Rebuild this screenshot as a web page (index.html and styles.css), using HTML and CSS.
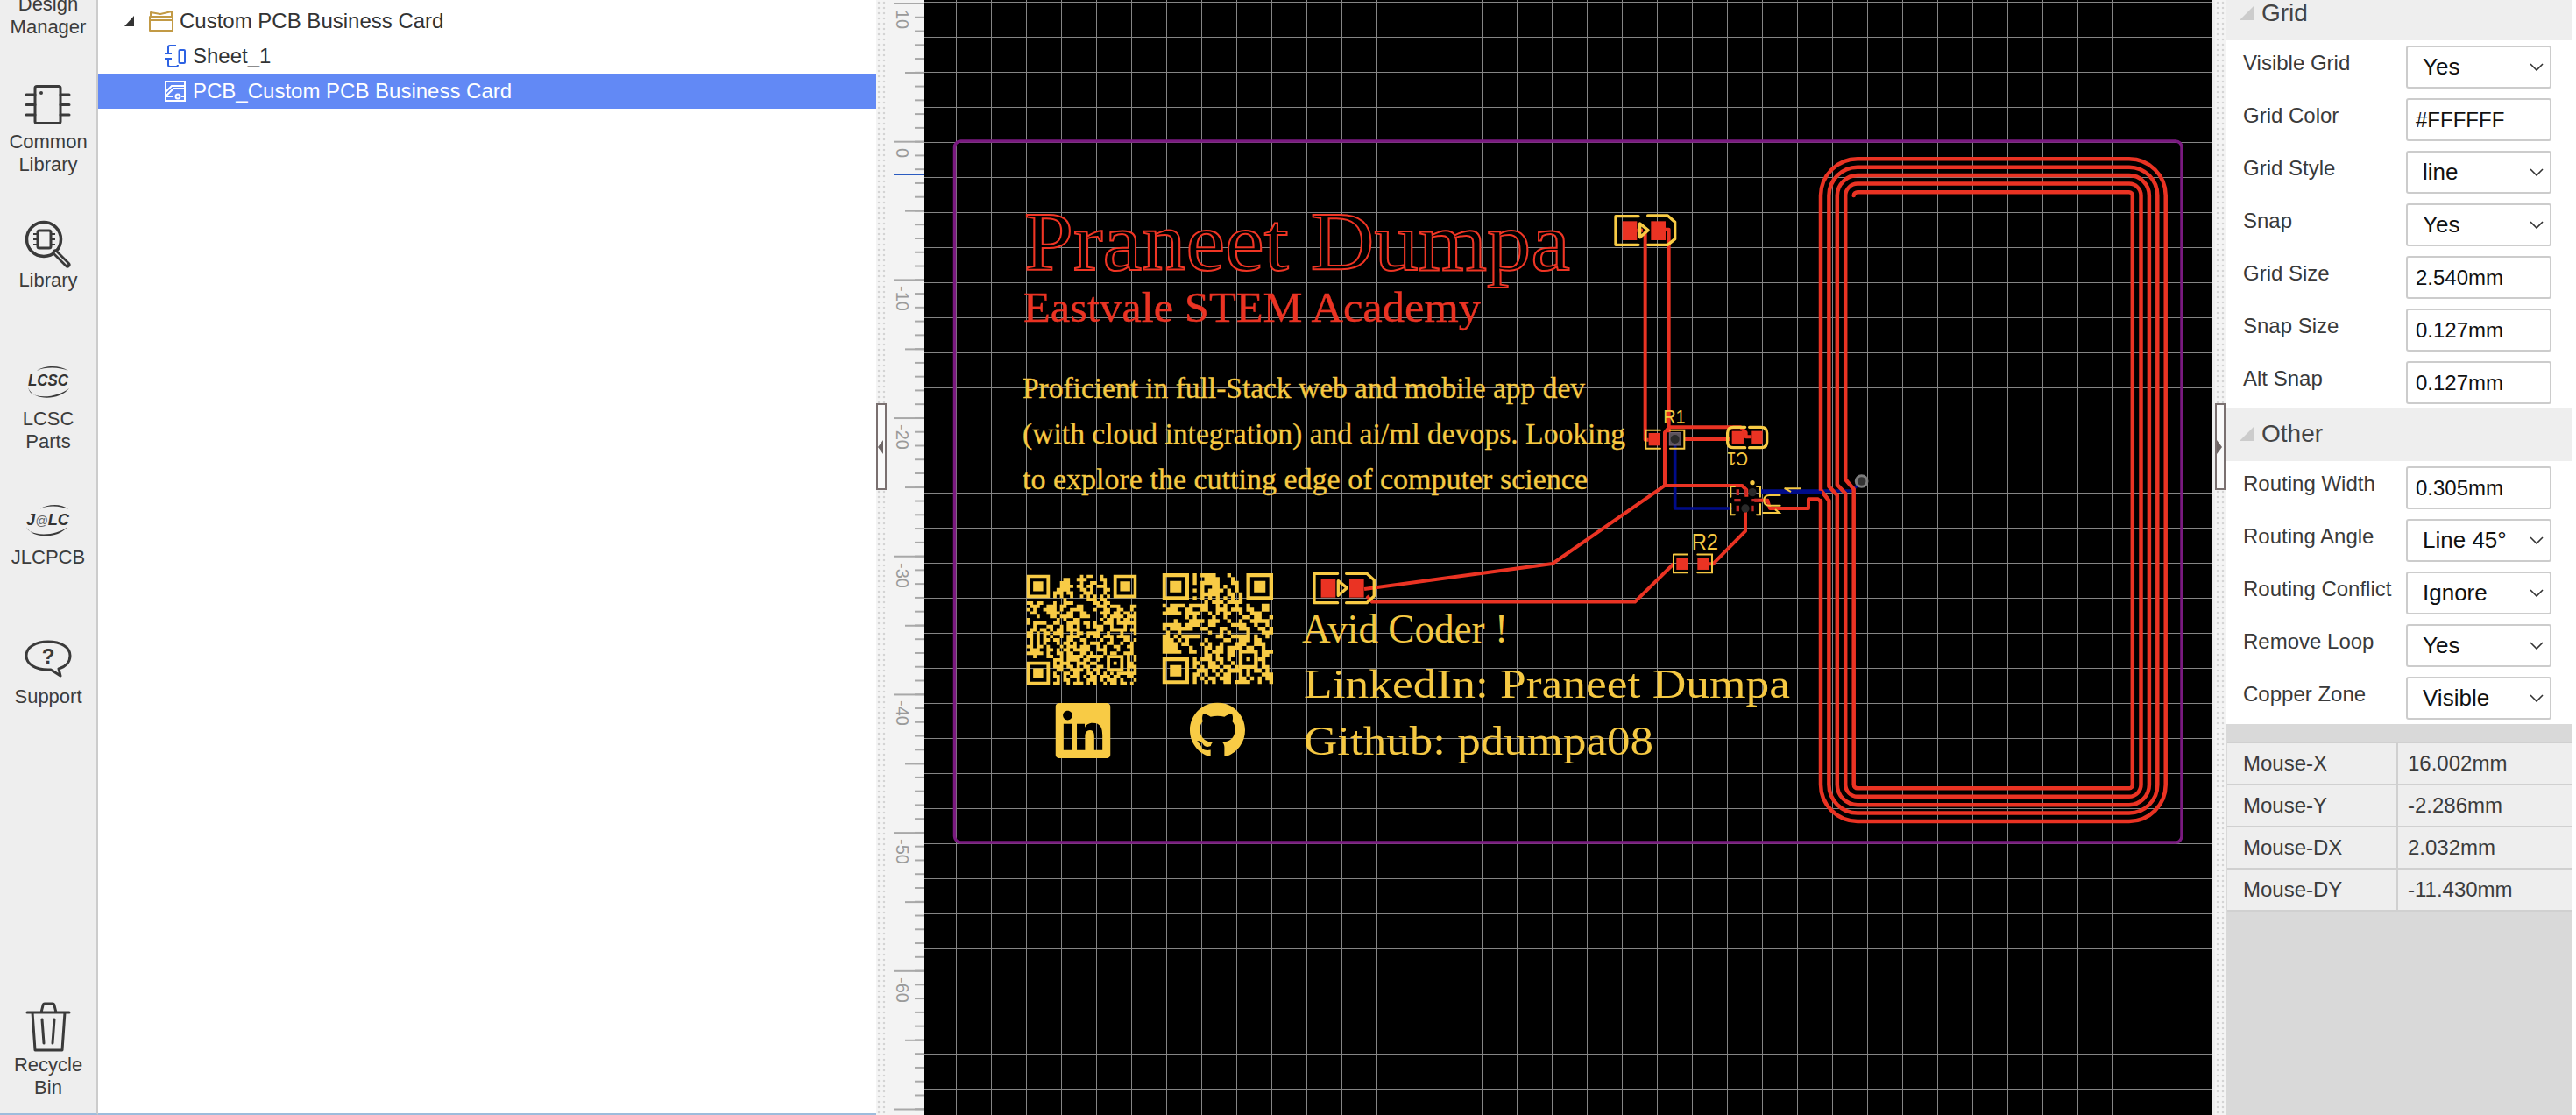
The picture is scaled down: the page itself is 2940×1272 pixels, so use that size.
FILE: index.html
```html
<!DOCTYPE html>
<html lang="en">
<head>
<meta charset="utf-8">
<title>Custom PCB Business Card</title>
<link rel="stylesheet" href="styles.css">
</head>
<body>
<div class="app">

  <nav class="rail">
    <div class="rail-item rail-design">
      <span class="rail-label">Design<br>Manager</span>
    </div>
    <div class="rail-item rail-common">
      <svg class="rail-icon" width="50" height="45" viewBox="30 97 50 45">
        <rect class="ic" x="40" y="98.5" width="29" height="42" rx="2"/>
        <path class="ic" d="M30 108h10M30 119.500h10M30 131h10M69 108h10M69 119.500h10M69 131h10"/>
        <circle class="ic-fill" cx="47" cy="106" r="2"/>
      </svg>
      <span class="rail-label">Common<br>Library</span>
    </div>
    <div class="rail-item rail-library">
      <svg class="rail-icon" width="52" height="52" viewBox="29 252 52 52">
        <circle class="ic ic-thick" cx="50" cy="273" r="19.500"/>
        <rect class="ic" x="43" y="263" width="15" height="20" rx="2"/>
        <path class="ic-thin" d="M38 267h5M38 273h5M38 279h5M58 267h5M58 273h5M58 279h5"/>
        <path class="ic ic-handle" d="M63 288l14 14"/>
        <path class="ic-handle-in" d="M63.500 288.500l13 13"/>
      </svg>
      <span class="rail-label">Library</span>
    </div>
    <div class="rail-item rail-lcsc">
      <svg class="rail-icon" width="50" height="38" viewBox="30 417 50 38">
        <path class="ic-fill" d="M42 423c8-6 26-7 36 0-9-4-26-5-36 0z"/>
        <path class="ic-fill" d="M32 442c6 16 36 15 47 1-11 9-34 13-44 5-1-1-2-3-3-6z"/>
        <text class="logo-text" x="32" y="440" textLength="46" lengthAdjust="spacingAndGlyphs">LCSC</text>
      </svg>
      <span class="rail-label">LCSC<br>Parts</span>
    </div>
    <div class="rail-item rail-jlc">
      <svg class="rail-icon" width="52" height="37" viewBox="29 575 52 37">
        <path class="ic-fill" d="M45 581c9-6 25-7 33 0-9-4-24-5-33 0z"/>
        <path class="ic-fill" d="M30 601c7 14 36 14 47 0-11 9-32 11-43 5-2-1-3-3-4-5z"/>
        <text class="logo-text" x="30" y="599" textLength="49" lengthAdjust="spacingAndGlyphs">J<tspan class="logo-at">@</tspan>LC</text>
      </svg>
      <span class="rail-label">JLCPCB</span>
    </div>
    <div class="rail-item rail-support">
      <svg class="rail-icon" width="54" height="44" viewBox="28 730 54 44">
        <path class="ic" d="M55 732c14 0 25 6 25 16 0 8-6 13-13 15l2 8-11-7c-1 0-2 0-3 0-14 0-25-6-25-16s11-16 25-16z"/>
        <text class="help-mark" x="55" y="757">?</text>
      </svg>
      <span class="rail-label">Support</span>
    </div>
    <div class="rail-item rail-bin">
      <svg class="rail-icon" width="50" height="56" viewBox="30 1144 50 56">
        <path class="ic" d="M31 1155h48M47 1155l2-8c0-1 1-2 2-2h9c1 0 2 1 2 2l2 8M37 1155l3 43h31l3-43M48 1163l2 27M62 1163l-2 27"/>
      </svg>
      <span class="rail-label">Recycle<br>Bin</span>
    </div>
  </nav>

  <aside class="tree">
    <div class="tree-row tree-root">
      <span class="tree-arrow"></span>
      <svg class="tree-folder" width="28" height="25" viewBox="170 12 28 25">
        <path class="folder-line" d="M171 19h26v16h-26zM172 19v-5l11 2 13-3v6M172 23h25"/>
      </svg>
      <span class="tree-name">Custom PCB Business Card</span>
    </div>
    <div class="tree-row tree-child">
      <svg width="24" height="27" viewBox="188 53 24 27">
        <path class="sheet-line" d="M201 54h-7c-1 0-2 1-2 2v6M188 63h8M188 69h8M192 70v6c0 1 1 2 2 2h7c1 0 2-1 2-2"/>
        <rect class="sheet-line" x="204.500" y="59" width="6.500" height="15" rx="1"/>
      </svg>
      <span class="tree-name">Sheet_1</span>
    </div>
    <div class="tree-row tree-child tree-selected">
      <svg width="24" height="24" viewBox="188 94 24 24">
        <rect class="pcb-line" x="189" y="95" width="22" height="22"/>
        <path class="pcb-line" d="M189 107l7-7h15M189 112l9-9h13M198 112h-9M207 112h4"/>
        <circle class="pcb-line" cx="203" cy="112" r="2.500"/>
      </svg>
      <span class="tree-name">PCB_Custom PCB Business Card</span>
    </div>
  </aside>

  <div class="split split-left">
    <div class="split-handle"><span class="split-arrow-left"></span></div>
  </div>

  <div class="ruler">
    <span class="ruler-label">10</span>
    <span class="ruler-label">0</span>
    <span class="ruler-label">-10</span>
    <span class="ruler-label">-20</span>
    <span class="ruler-label">-30</span>
    <span class="ruler-label">-40</span>
    <span class="ruler-label">-50</span>
    <span class="ruler-label">-60</span>
    <span class="ruler-mark"></span>
  </div>

  <main class="canvas">
    <svg class="board" width="1469" height="1272" viewBox="1055 0 1469 1272">
      <rect class="outline" x="1089.500" y="161" width="1400.500" height="800" rx="7"/>

      <g class="copper-bottom">
        <path d="M2010 560H2113L2125 549"/>
      </g>

      <path class="coil" d="M2078 571V895A42 42 0 0 0 2120 937H2430A41.700 41.700 0 0 0 2471.700 895V223A41.700 41.700 0 0 0 2430 181.300H2120A42 42 0 0 0 2078 223V559L2087.400 571V895A32.600 32.600 0 0 0 2120 927.600H2430A32.300 32.300 0 0 0 2462.300 895V223A32.300 32.300 0 0 0 2430 190.700H2120A32.600 32.600 0 0 0 2087.400 223V555L2096.800 565V895A23.200 23.200 0 0 0 2120 918.200H2430A22.900 22.900 0 0 0 2452.900 895V223A22.900 22.900 0 0 0 2430 200.100H2120A23.200 23.200 0 0 0 2096.800 223V553L2106.200 563V895A13.800 13.800 0 0 0 2120 908.800H2430A13.500 13.500 0 0 0 2443.500 895V223A13.500 13.500 0 0 0 2430 209.600H2120A13.800 13.800 0 0 0 2106.200 223V547L2115.700 558V895A4.300 4.300 0 0 0 2120 899.300H2430A3.800 3.800 0 0 0 2433.800 895V223A3.800 3.800 0 0 0 2430 219.200H2120A4.300 4.300 0 0 0 2115.700 223"/>

      <text class="t-title" x="1169" y="308" textLength="623" lengthAdjust="spacingAndGlyphs">Praneet Dumpa</text>
      <text class="t-school" x="1168" y="367" textLength="522" lengthAdjust="spacingAndGlyphs">Eastvale STEM Academy</text>
      <text class="t-body" x="1167" y="454" textLength="642" lengthAdjust="spacingAndGlyphs">Proficient in full-Stack web and mobile app dev</text>
      <text class="t-body" x="1167" y="506" textLength="688" lengthAdjust="spacingAndGlyphs">(with cloud integration) and ai/ml devops. Looking</text>
      <text class="t-body" x="1167" y="558" textLength="645" lengthAdjust="spacingAndGlyphs">to explore the cutting edge of computer science</text>
      <text class="t-big" x="1486" y="733" textLength="235" lengthAdjust="spacingAndGlyphs">Avid Coder !</text>
      <text class="t-big" x="1488" y="796" textLength="555" lengthAdjust="spacingAndGlyphs">LinkedIn: Praneet Dumpa</text>
      <text class="t-big" x="1488" y="861" textLength="399" lengthAdjust="spacingAndGlyphs">Github: pdumpa08</text>

      <svg x="1171.500" y="655.500" width="126" height="126" viewBox="0 0 33 33">
        <path class="qr-frame" d="M.5.5h6v6h-6zM26.500.5h6v6h-6zM.5 26.500h6v6h-6zM24.500 24.500h4v4h-4z"/>
        <path class="qr-solid" d="M2 2h3v3H2zM28 2h3v3h-3zM2 28h3v3H2zM26 26h1v1h-1z"/>
        <path class="qr-run" d="M16 .5h1M18 .5h2M22 .5h1M11 1.500h2M15 1.500h3M22 1.500h2M10 2.500h3M16 2.500h1M19 2.500h2M23 2.500h1M10 3.500h4M15 3.500h2M18 3.500h2M21 3.500h3M9 4.500h4M16 4.500h2M19 4.500h1M23 4.500h2M8 5.500h3M12 5.500h2M17 5.500h3M23 5.500h1M8 6.500h1M10 6.500h1M13 6.500h1M16 6.500h1M18 6.500h1M20 6.500h1M22 6.500h1M24 6.500h1M11 7.500h1M18 7.500h3M22 7.500h2M0 8.500h2M3 8.500h2M8 8.500h1M11 8.500h3M20 8.500h2M23 8.500h2M1 9.500h3M6 9.500h3M10 9.500h2M15 9.500h2M21 9.500h3M25 9.500h3M31 9.500h2M0 10.500h1M2 10.500h1M5 10.500h4M10 10.500h1M13 10.500h4M20 10.500h1M23 10.500h2M27 10.500h2M31 10.500h1M1 11.500h2M6 11.500h4M12 11.500h2M16 11.500h2M22 11.500h3M26 11.500h2M29 11.500h2M32 11.500h1M3 12.500h1M7 12.500h2M10 12.500h4M16 12.500h3M23 12.500h1M25 12.500h4M30 12.500h3M0 13.500h1M9 13.500h1M11 13.500h1M14 13.500h2M22 13.500h1M24 13.500h2M27 13.500h1M29 13.500h2M32 13.500h1M0 14.500h1M2 14.500h4M8 14.500h2M12 14.500h4M17 14.500h2M20 14.500h1M23 14.500h3M27 14.500h4M31 14.500h2M2 15.500h1M6 15.500h2M10 15.500h1M12 15.500h2M15 15.500h1M18 15.500h1M20 15.500h3M25 15.500h1M29 15.500h1M32 15.500h1M1 16.500h2M4 16.500h2M7 16.500h1M9 16.500h2M12 16.500h4M21 16.500h2M25 16.500h5M31 16.500h2M0 17.500h2M3 17.500h1M5 17.500h2M8 17.500h3M13 17.500h1M15 17.500h2M18 17.500h4M24 17.500h1M28 17.500h1M32 17.500h1M0 18.500h2M3 18.500h1M5 18.500h1M7 18.500h1M10 18.500h1M12 18.500h4M18 18.500h1M20 18.500h2M23 18.500h3M27 18.500h3M30 18.500h1M1 19.500h1M3 19.500h1M5 19.500h2M8 19.500h2M12 19.500h2M16 19.500h2M22 19.500h1M25 19.500h1M29 19.500h2M32 19.500h1M1 20.500h1M3 20.500h1M5 20.500h1M9 20.500h1M11 20.500h2M14 20.500h1M17 20.500h1M19 20.500h3M24 20.500h2M28 20.500h1M31 20.500h1M0 21.500h2M3 21.500h2M6 21.500h1M10 21.500h1M12 21.500h3M16 21.500h3M21 21.500h1M23 21.500h1M26 21.500h2M30 21.500h2M1 22.500h3M6 22.500h2M9 22.500h1M11 22.500h2M14 22.500h5M21 22.500h3M27 22.500h1M31 22.500h1M0 23.500h5M6 23.500h1M9 23.500h2M12 23.500h2M16 23.500h2M19 23.500h1M23 23.500h1M25 23.500h2M29 23.500h3M2 24.500h1M6 24.500h2M10 24.500h1M12 24.500h5M18 24.500h5M30 24.500h1M32 24.500h1M8 25.500h3M12 25.500h4M17 25.500h2M21 25.500h1M30 25.500h1M32 25.500h1M8 26.500h1M10 26.500h3M15 26.500h3M19 26.500h2M30 26.500h2M8 27.500h3M12 27.500h2M15 27.500h1M17 27.500h2M21 27.500h2M30 27.500h3M9 28.500h2M13 28.500h4M18 28.500h1M20 28.500h2M30 28.500h1M32 28.500h1M8 29.500h1M11 29.500h2M14 29.500h2M18 29.500h2M21 29.500h1M23 29.500h1M25 29.500h1M27 29.500h6M8 30.500h2M11 30.500h1M13 30.500h3M17 30.500h1M19 30.500h2M22 30.500h3M26 30.500h2M30 30.500h2M9 31.500h1M11 31.500h2M15 31.500h1M18 31.500h3M22 31.500h1M24 31.500h3M28 31.500h1M32 31.500h1M8 32.500h2M12 32.500h1M14 32.500h3M18 32.500h1M20 32.500h1M23 32.500h1M25 32.500h2M28 32.500h2M31 32.500h1"/>
      </svg>

      <svg x="1326.500" y="654" width="126.500" height="126.500" viewBox="0 0 29 29">
        <path class="qr-frame" d="M.5.5h6v6h-6zM22.500.5h6v6h-6zM.5 22.500h6v6h-6zM20.500 20.500h4v4h-4z"/>
        <path class="qr-solid" d="M2 2h3v3H2zM24 2h3v3h-3zM2 24h3v3H2zM22 22h1v1h-1z"/>
        <path class="qr-run" d="M8 .5h1M10 .5h4M17 .5h1M8 1.500h1M11 1.500h4M18 1.500h1M8 2.500h1M10 2.500h5M18 2.500h2M10 3.500h1M13 3.500h2M16 3.500h1M19 3.500h1M8 4.500h1M10 4.500h1M12 4.500h4M17 4.500h1M19 4.500h1M10 5.500h5M17 5.500h2M20 5.500h1M8 6.500h1M10 6.500h1M12 6.500h1M14 6.500h1M16 6.500h1M18 6.500h1M20 6.500h1M11 7.500h1M13 7.500h3M17 7.500h2M19 7.500h2M0 8.500h1M2 8.500h4M7 8.500h5M14 8.500h1M16 8.500h1M19 8.500h1M22 8.500h1M26 8.500h2M1 9.500h3M6 9.500h2M10 9.500h2M14 9.500h3M18 9.500h3M22 9.500h2M26 9.500h2M0 10.500h5M6 10.500h4M12 10.500h1M14 10.500h1M16 10.500h2M20 10.500h1M23 10.500h3M6 11.500h1M8 11.500h1M13 11.500h1M16 11.500h1M21 11.500h2M24 11.500h2M28 11.500h1M3 12.500h1M7 12.500h4M12 12.500h3M17 12.500h1M20 12.500h1M23 12.500h5M0 13.500h5M6 13.500h4M12 13.500h2M18 13.500h4M24 13.500h1M27 13.500h1M0 14.500h1M2 14.500h4M6 14.500h2M10 14.500h2M15 14.500h2M20 14.500h3M25 14.500h2M28 14.500h1M1 15.500h1M4 15.500h1M12 15.500h1M15 15.500h1M17 15.500h1M22 15.500h1M26 15.500h3M0 16.500h2M3 16.500h1M5 16.500h5M14 16.500h2M18 16.500h5M24 16.500h1M27 16.500h1M0 17.500h3M4 17.500h1M6 17.500h1M11 17.500h1M16 17.500h2M20 17.500h3M24 17.500h2M0 18.500h4M5 18.500h2M10 18.500h1M12 18.500h1M15 18.500h1M19 18.500h3M24 18.500h3M0 19.500h4M7 19.500h1M11 19.500h2M14 19.500h2M17 19.500h4M22 19.500h2M26 19.500h1M0 20.500h5M7 20.500h2M11 20.500h1M13 20.500h3M17 20.500h2M26 20.500h3M11 21.500h2M14 21.500h1M17 21.500h2M26 21.500h2M8 22.500h1M10 22.500h3M14 22.500h2M17 22.500h1M25 22.500h2M8 23.500h2M12 23.500h2M15 23.500h1M18 23.500h1M26 23.500h1M8 24.500h1M10 24.500h1M12 24.500h3M16 24.500h2M19 24.500h1M26 24.500h2M9 25.500h3M13 25.500h1M15 25.500h1M17 25.500h4M22 25.500h1M24 25.500h2M27 25.500h1M8 26.500h2M11 26.500h1M14 26.500h1M16 26.500h2M20 26.500h1M22 26.500h1M26 26.500h3M8 27.500h1M10 27.500h1M12 27.500h2M15 27.500h3M20 27.500h2M23 27.500h1M25 27.500h1M27 27.500h2M8 28.500h1M11 28.500h1M13 28.500h1M16 28.500h2M19 28.500h4M25 28.500h1M28 28.500h1"/>
      </svg>

      <svg x="1204.500" y="802" width="63" height="63" viewBox="0 0 24 24">
        <path class="mark" d="M20.447 20.452h-3.554v-5.569c0-1.328-.027-3.037-1.852-3.037-1.853 0-2.136 1.445-2.136 2.939v5.667H9.351V9h3.414v1.561h.046c.477-.9 1.637-1.850 3.370-1.850 3.601 0 4.267 2.370 4.267 5.455v6.286zM5.337 7.433c-1.144 0-2.063-.926-2.063-2.065 0-1.138.92-2.063 2.063-2.063 1.140 0 2.064.925 2.064 2.063 0 1.139-.925 2.065-2.064 2.065zm1.782 13.019H3.555V9h3.564v11.452zM22.225 0H1.771C.792 0 0 .774 0 1.729v20.542C0 23.227.792 24 1.771 24h20.451C23.200 24 24 23.227 24 22.271V1.729C24 .774 23.200 0 22.222 0h.003z"/>
      </svg>
      <svg x="1358" y="801.500" width="63" height="63" viewBox="0 0 16 16">
        <path class="mark" d="M8 0C3.580 0 0 3.580 0 8c0 3.540 2.290 6.530 5.470 7.590.4.070.550-.170.550-.380 0-.190-.010-.820-.010-1.490-2.010.370-2.530-.490-2.690-.940-.090-.230-.480-.940-.820-1.130-.280-.150-.680-.520-.010-.530.630-.010 1.080.580 1.230.820.720 1.210 1.870.870 2.330.660.070-.520.280-.870.510-1.070-1.780-.2-3.640-.890-3.640-3.950 0-.870.310-1.590.820-2.150-.080-.2-.360-1.020.080-2.120 0 0 .670-.210 2.200.820.640-.180 1.320-.270 2-.270.680 0 1.360.090 2 .270 1.530-1.040 2.200-.820 2.200-.820.440 1.100.160 1.920.080 2.120.510.560.820 1.270.820 2.150 0 3.070-1.870 3.750-3.650 3.950.290.250.540.730.540 1.480 0 1.070-.010 1.930-.010 2.200 0 .210.150.460.550.380A8.013 8.013 0 0016 8c0-4.420-3.580-8-8-8z"/>
      </svg>

      <g transform="translate(1780 200) scale(.3333)">
        <path class="z-blue" d="M395 925V1140H586M690 1085H893"/>
        <path class="z-trace" d="M293 190V905H305M363 185H374V880M360 1062V880L375 862H620L638 880V895H655M427 903H585M360 1062H625L640 1077V1100M636 1150V1218L525 1330H512M667 1112H712L720 1140H852V1108H885L893 1116M265 188H285"/>
        <path class="z-trace" d="M360 1062L-24 1329L-669 1416M390 1330L258 1460H-642L-660 1440"/>

        <path class="z-silk-lg" d="M270 140H192V238H270M302 138H370L395 160V218L370 238H302"/>
        <path class="z-silk-lg" d="M275 165L303 188L275 212Z"/>
        <rect class="z-pad" x="215" y="157" width="50" height="65"/>
        <rect class="z-pad" x="313" y="157" width="50" height="65"/>

        <path class="z-silk" d="M345 872H295V935H345M378 872H427V935H378"/>
        <rect class="z-pad" x="305" y="882" width="40" height="43"/>
        <rect class="z-via-pad" x="376" y="881" width="39" height="43"/>
        <circle class="z-via-hole" cx="395" cy="903" r="15"/>
        <text class="z-ref" x="355" y="850" textLength="76" lengthAdjust="spacingAndGlyphs">R1</text>

        <path class="z-silk-lg" d="M635 862H595Q575 862 575 882V912Q575 932 595 932H635M650 862H690Q710 862 710 882V912Q710 932 690 932H650"/>
        <rect class="z-pad" x="590" y="875" width="40" height="43"/>
        <rect class="z-pad" x="655" y="875" width="40" height="43"/>
        <text class="z-ref" x="0" y="0" transform="translate(645 948) rotate(180)" textLength="72" lengthAdjust="spacingAndGlyphs">C1</text>

        <path class="z-silk" d="M390 1298V1360H438M390 1298H438M472 1298H522V1360H472"/>
        <rect class="z-pad" x="400" y="1310" width="40" height="40"/>
        <rect class="z-pad" x="472" y="1310" width="40" height="40"/>
        <text class="z-ref z-ref-lg" x="452" y="1280" textLength="91" lengthAdjust="spacingAndGlyphs">R2</text>

        <path class="z-silk" d="M600 1065H586V1100M586 1125V1162H600M675 1065H687V1100M687 1125V1162H675"/>
        <path class="z-pad-line" d="M610 1075V1095M637 1075V1095M598 1112H620M655 1112H680M610 1130V1150M637 1130V1150M660 1130V1150"/>
        <circle class="z-dark" cx="660" cy="1085" r="14"/>
        <circle class="z-dark" cx="636" cy="1140" r="14"/>
        <circle class="z-dot" cx="660" cy="1052" r="8"/>

        <path class="z-silk" d="M772 1072H825M772 1072L790 1082M755 1095H718Q700 1095 700 1112Q700 1130 718 1130H755M697 1155H752L740 1145"/>

        <circle class="z-via-ring" cx="1034" cy="1047" r="19"/>
      </g>

      <g transform="translate(1120 620) scale(.3333)">
        <path class="z-silk-lg" d="M1220 103H1140V203H1220M1250 103H1320L1345 125V180L1320 203H1250"/>
        <path class="z-silk-lg" d="M1222 128L1252 152L1222 178Z"/>
        <rect class="z-pad" x="1163" y="120" width="50" height="65"/>
        <rect class="z-pad" x="1260" y="120" width="50" height="65"/>
      </g>
    </svg>
  </main>

  <div class="split split-right">
    <div class="split-handle"><span class="split-arrow-right"></span></div>
  </div>

  <section class="panel">
    <div class="panel-head"><span class="head-arrow"></span>Grid</div>
    <div class="panel-body">
      <div class="row"><span class="row-label">Visible Grid</span><div class="select">Yes<svg class="chev" width="16" height="9" viewBox="0 0 16 9"><path d="M1 1l7 7 7-7"/></svg></div></div>
      <div class="row"><span class="row-label">Grid Color</span><div class="input">#FFFFFF</div></div>
      <div class="row"><span class="row-label">Grid Style</span><div class="select">line<svg class="chev" width="16" height="9" viewBox="0 0 16 9"><path d="M1 1l7 7 7-7"/></svg></div></div>
      <div class="row"><span class="row-label">Snap</span><div class="select">Yes<svg class="chev" width="16" height="9" viewBox="0 0 16 9"><path d="M1 1l7 7 7-7"/></svg></div></div>
      <div class="row"><span class="row-label">Grid Size</span><div class="input">2.540mm</div></div>
      <div class="row"><span class="row-label">Snap Size</span><div class="input">0.127mm</div></div>
      <div class="row"><span class="row-label">Alt Snap</span><div class="input">0.127mm</div></div>
    </div>
    <div class="panel-head"><span class="head-arrow"></span>Other</div>
    <div class="panel-body panel-other">
      <div class="row"><span class="row-label">Routing Width</span><div class="input">0.305mm</div></div>
      <div class="row"><span class="row-label">Routing Angle</span><div class="select">Line 45°<svg class="chev" width="16" height="9" viewBox="0 0 16 9"><path d="M1 1l7 7 7-7"/></svg></div></div>
      <div class="row"><span class="row-label">Routing Conflict</span><div class="select">Ignore<svg class="chev" width="16" height="9" viewBox="0 0 16 9"><path d="M1 1l7 7 7-7"/></svg></div></div>
      <div class="row"><span class="row-label">Remove Loop</span><div class="select">Yes<svg class="chev" width="16" height="9" viewBox="0 0 16 9"><path d="M1 1l7 7 7-7"/></svg></div></div>
      <div class="row"><span class="row-label">Copper Zone</span><div class="select">Visible<svg class="chev" width="16" height="9" viewBox="0 0 16 9"><path d="M1 1l7 7 7-7"/></svg></div></div>
    </div>
    <div class="mouse">
      <div class="mouse-row"><span class="mouse-key">Mouse-X</span><span class="mouse-val">16.002mm</span></div>
      <div class="mouse-row"><span class="mouse-key">Mouse-Y</span><span class="mouse-val">-2.286mm</span></div>
      <div class="mouse-row"><span class="mouse-key">Mouse-DX</span><span class="mouse-val">2.032mm</span></div>
      <div class="mouse-row"><span class="mouse-key">Mouse-DY</span><span class="mouse-val">-11.430mm</span></div>
    </div>
  </section>

  <div class="edge"></div>
</div>
</body>
</html>
```

FILE: styles.css
```css
* { box-sizing: border-box; }
html, body { margin: 0; padding: 0; height: 100%; background: #fff; overflow: hidden; }
body { font-family: "Liberation Sans", Arial, sans-serif; color: #333; }

.app { display: flex; width: 2940px; height: 1272px; overflow: hidden; }

/* left rail */
.rail {
  width: 112px; flex: none; height: 1272px; background: #eee;
  border-right: 2px solid #ccc; border-bottom: 2px solid #9dbcdc;
  display: flex; flex-direction: column; align-items: center;
  overflow: hidden;
}
.rail-item { display: flex; flex-direction: column; align-items: center; flex: none; }
.rail-label { font-size: 22px; line-height: 26px; text-align: center; color: #3c3c3c; display: block; }
.rail-icon { display: block; overflow: visible; }
.rail-design { margin-top: -8px; }
.rail-common { margin-top: 53px; }
.rail-common .rail-icon { margin-bottom: 7px; }
.rail-library { margin-top: 51px; }
.rail-library .rail-icon { margin-bottom: 3px; }
.rail-lcsc { margin-top: 84px; }
.rail-lcsc .rail-icon { margin-bottom: 10px; }
.rail-jlc { margin-top: 58px; }
.rail-jlc .rail-icon { margin-bottom: 11px; }
.rail-support { margin-top: 81px; }
.rail-support .rail-icon { margin-bottom: 8px; }
.rail-bin { margin-top: auto; margin-bottom: 16px; }
.rail-bin .rail-icon { margin-bottom: 2px; }

.ic { fill: none; stroke: #3a3a3a; stroke-width: 3; stroke-linejoin: round; stroke-linecap: round; }
.ic-thick { stroke-width: 3.500; }
.ic-thin { fill: none; stroke: #3a3a3a; stroke-width: 2; }
.ic-fill { fill: #3a3a3a; }
.ic-handle { stroke-width: 7; }
.ic-handle-in { fill: none; stroke: #eee; stroke-width: 1.500; stroke-linecap: round; }
.logo-text { font-family: "Liberation Sans", Arial, sans-serif; font-weight: 700; font-style: italic; font-size: 19px; fill: #333; }
.logo-at { font-weight: 400; font-size: 15px; fill: #666; }
.help-mark { font-family: "Liberation Sans", Arial, sans-serif; font-weight: 700; font-size: 24px; text-anchor: middle; fill: #3a3a3a; }

/* project tree */
.tree {
  width: 888px; flex: none; height: 1272px; background: #fff; padding-top: 4px;
  border-bottom: 2px solid #9dbcdc;
}
.tree-row { height: 40px; display: flex; align-items: center; font-size: 24px; color: #333; }
.tree-name { white-space: nowrap; }
.tree-root { padding-left: 30px; }
.tree-arrow { width: 0; height: 0; border-bottom: 12px solid #333; border-left: 11px solid transparent; margin-right: 17px; }
.tree-folder { margin-right: 7px; }
.tree-child { padding-left: 76px; }
.tree-child .tree-name { margin-left: 8px; }
.tree-selected { background: #6289f5; color: #fff; }
.folder-line { fill: none; stroke: #c29a45; stroke-width: 2; stroke-linejoin: round; }
.sheet-line { fill: none; stroke: #2d62e3; stroke-width: 2; }
.pcb-line { fill: none; stroke: #fff; stroke-width: 2; }

/* splitters */
.split {
  flex: none; height: 1272px; position: relative;
  background-color: #f4f4f4;
  background-image: radial-gradient(circle, #d4d4d4 1.400px, transparent 1.600px);
  background-size: 6px 6px;
}
.split-left { width: 12px; }
.split-right { width: 16px; border-left: 4px solid #eee; }
.split-handle {
  position: absolute; top: 460px; left: 0; width: 12px; height: 99px;
  background: #fafafa; border: 2px solid #7a7070;
  display: flex; align-items: center;
}
.split-arrow-left { border-right: 6px solid #6f6666; border-top: 8px solid transparent; border-bottom: 8px solid transparent; }
.split-arrow-right { border-left: 6px solid #6f6666; border-top: 8px solid transparent; border-bottom: 8px solid transparent; }

/* ruler */
.ruler {
  width: 43px; flex: none; height: 1272px; position: relative; padding: 11px 0 0 8px;
  display: flex; flex-direction: column; overflow: hidden;
  background-color: #f3f3f3;
  background-image:
    linear-gradient(#a8a8a8 2px, transparent 2px),
    linear-gradient(#a8a8a8 2px, transparent 2px),
    linear-gradient(#a8a8a8 2px, transparent 2px);
  background-repeat: repeat-y;
  background-size: 35px 157.700px, 22px 157.700px, 11px 15.770px;
  background-position: right 0 top 3px, right 0 top 82px, right 0 top 3px;
}
.ruler-label {
  writing-mode: vertical-rl; height: 157.700px; flex: none; align-self: flex-start;
  font-size: 20px; line-height: 20px; color: #9a9a9a; white-space: nowrap;
}
.ruler-mark { position: absolute; left: 8px; right: 0; top: 198px; height: 2px; background: #2a5bc0; }

/* canvas */
.canvas {
  width: 1469px; flex: none; height: 1272px; overflow: hidden; background-color: #000;
  background-image:
    linear-gradient(90deg, #858585 1px, transparent 1px),
    linear-gradient(#858585 1px, transparent 1px);
  background-size: 40px 40px;
  background-position: 36px 0, 0 2px;
}
.board { display: block; }
.outline { fill: none; stroke: #7a1a80; stroke-width: 3.500; }
.coil { fill: none; stroke: #ea3323; stroke-width: 4.500; stroke-linecap: round; stroke-linejoin: round; }
.copper-bottom path { fill: none; stroke: #000c8a; stroke-width: 3.500; }

.t-title { font-family: "Liberation Serif", "Times New Roman", serif; font-size: 96px; fill: #000; stroke: #f03524; stroke-width: 2; paint-order: fill; }
.t-school { font-family: "Liberation Serif", "Times New Roman", serif; font-size: 48px; fill: #ea3323; stroke: #ea3323; stroke-width: .4; }
.t-body { font-family: "Liberation Serif", "Times New Roman", serif; font-size: 33px; fill: #f5c842; stroke: #f5c842; stroke-width: .3; }
.t-big { font-family: "Liberation Serif", "Times New Roman", serif; font-size: 47px; fill: #f5c842; }

.qr-frame { fill: none; stroke: #f8cb45; stroke-width: 1; }
.qr-solid { fill: #f8cb45; }
.qr-run { fill: none; stroke: #f8cb45; stroke-width: 1.020; }
.mark { fill: #f8cb45; }

.z-trace { fill: none; stroke: #ea3323; stroke-width: 12; stroke-linejoin: round; }
.z-blue { fill: none; stroke: #000c8a; stroke-width: 11; stroke-linejoin: round; stroke-linecap: round; }
.z-silk { fill: none; stroke: #f5c842; stroke-width: 6; stroke-linecap: round; }
.z-silk-lg { fill: none; stroke: #f8cb45; stroke-width: 10; stroke-linecap: round; stroke-linejoin: round; }
.z-pad { fill: #ea3323; }
.z-via-pad { fill: #5a525a; stroke: #7a6a7a; stroke-width: 3; }
.z-via-hole { fill: #2a2a2a; }
.z-ref { font-family: "Liberation Sans", Arial, sans-serif; font-size: 68px; fill: #f5c842; }
.z-ref-lg { font-size: 76px; }
.z-pad-line { fill: none; stroke: #c42a28; stroke-width: 10; }
.z-dark { fill: #2a2a2a; }
.z-dot { fill: #f5c842; }
.z-via-ring { fill: #333; stroke: #7c7c7c; stroke-width: 9; }

/* property panel */
.panel { width: 396px; flex: none; height: 1286px; background: #d9d9d9; margin-top: -14px; }
.panel-head {
  height: 60px; background: #eee; display: flex; align-items: center;
  font-size: 28px; color: #444; padding: 0 0 2px 16px;
}
.head-arrow { width: 0; height: 0; border-bottom: 16px solid #ccc; border-left: 16px solid transparent; margin-right: 9px; }
.panel-body { background: #fff; }
.panel-other { height: 300px; }
.row { height: 60px; display: flex; align-items: flex-start; }
.row-label { width: 206px; padding-left: 20px; font-size: 24px; line-height: 52px; color: #3a3a3a; white-space: nowrap; flex: none; }
.input, .select {
  width: 166px; height: 49px; margin-top: 6px; background: #fff;
  border: 2px solid #ccc; border-radius: 3px;
  color: #111; line-height: 47px;
  display: flex; align-items: center; justify-content: space-between;
  white-space: nowrap;
}
.input { padding-left: 9px; font-size: 24px; }
.select { padding: 0 7px 0 17px; font-size: 26px; }
.chev { fill: none; stroke: #333; stroke-width: 1.600; flex: none; }
.chev path { fill: none; }

.mouse { margin: 20px 0 0 2px; border-top: 2px solid #d0d0d0; }
.mouse-row { height: 48px; display: flex; align-items: center; background: #eee; border-bottom: 2px solid #d0d0d0; font-size: 24px; color: #3c3c3c; }
.mouse-key { width: 195px; padding-left: 18px; height: 46px; line-height: 46px; border-right: 2px solid #d0d0d0; flex: none; }
.mouse-val { padding-left: 11px; }

.edge { width: 4px; flex: none; background: #fff; }
```
